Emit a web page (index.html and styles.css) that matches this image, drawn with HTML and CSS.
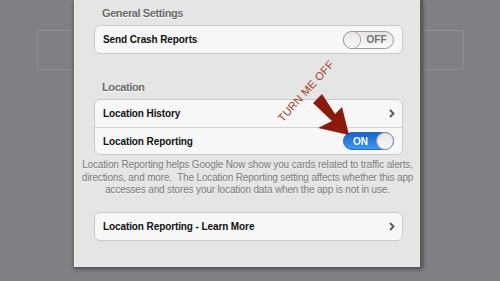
FILE: index.html
```html
<!DOCTYPE html>
<html lang="en">
<head>
  <meta charset="UTF-8">
  <title>Google Now - Settings</title>
  <link rel="stylesheet" href="styles.css">
</head>
<body>
  <div class="backdrop-box"></div>
  <div class="panel">
    <h2 class="group-title">General Settings</h2>
    <div class="card">
      <div class="row">
        <span class="label">Send Crash Reports</span>
        <span class="toggle off"><span class="knob"></span><span class="state">OFF</span></span>
      </div>
    </div>

    <h2 class="group-title second">Location</h2>
    <div class="card">
      <div class="row">
        <span class="label">Location History</span>
        <svg class="chevron" width="6" height="9" viewBox="0 0 6 9"><polyline points="1,1 4.5,4.5 1,8" fill="none" stroke="#555" stroke-width="1.8"/></svg>
      </div>
      <div class="row">
        <span class="label">Location Reporting</span>
        <span class="toggle on"><span class="state">ON</span><span class="knob"></span></span>
      </div>
    </div>
    <p class="note">Location Reporting helps Google Now show you cards related to traffic alerts,<br>directions, and more.&nbsp; The Location Reporting setting affects whether this app<br>accesses and stores your location data when the app is not in use.</p>

    <div class="card last">
      <div class="row">
        <span class="label">Location Reporting - Learn More</span>
        <svg class="chevron" width="6" height="9" viewBox="0 0 6 9"><polyline points="1,1 4.5,4.5 1,8" fill="none" stroke="#555" stroke-width="1.8"/></svg>
      </div>
    </div>
  </div>

  <!-- annotation drawn over the screenshot -->
  <svg class="arrow" width="500" height="281" viewBox="0 0 500 281">
    <polygon points="322,94 313,103 332,121 318,128 349,135 342,107 335,114" fill="#8a1a0c"/>
  </svg>
  <div class="scribble">TURN ME OFF</div>
</body>
</html>
```

FILE: styles.css
```css
body {
  margin: 0;
  background: #7f8084;
  font-family: "Liberation Sans", Arial, sans-serif;
  height: 281px;
  overflow: hidden;
}
.backdrop-box {
  position: absolute;
  left: 37px;
  top: 30px;
  width: 425px;
  height: 38px;
  border: 1px solid #8e8f92;
}
.panel {
  position: relative;
  margin-left: 74px;
  width: 345px;
  padding: 6px 0 26px 0;
  background: #e5e5e5;
  border-left: 1px solid #ededed;
  border-right: 3px solid #5b5b5e;
  box-shadow: 0 2px 4px rgba(0,0,0,0.45);
}
.group-title {
  margin: 0 0 5px 27px;
  font-size: 11px;
  line-height: 14px;
  letter-spacing: -0.4px;
  font-weight: bold;
  color: #6a6a6a;
  text-shadow: 0 1px 0 #fff;
}
.group-title.second {
  margin-top: 26px;
}
.card {
  margin: 0 17px 0 19px;
  background: #f7f7f7;
  border: 1px solid #c9c9c9;
  border-radius: 6px;
}
.card.last {
  margin-top: 15px;
}
.row {
  display: flex;
  align-items: center;
  justify-content: space-between;
  height: 27px;
  padding: 0 7px 0 8px;
}
.row + .row {
  border-top: 1px solid #d3d3d3;
  height: 26px;
}
.label {
  font-size: 10px;
  letter-spacing: -0.1px;
  font-weight: bold;
  color: #111;
}
.chevron {
  display: block;
}
.toggle {
  display: flex;
  align-items: center;
  box-sizing: border-box;
  width: 51px;
  height: 18px;
  border-radius: 9px;
  border: 1px solid #9a9a9a;
  margin-right: 1px;
}
.toggle .knob {
  width: 16px;
  height: 16px;
  border-radius: 50%;
  background: linear-gradient(#e6e6e6, #fafafa);
  box-shadow: 0 0 0 1px #9c9c9c;
}
.toggle .state {
  flex: 1;
  text-align: center;
  font-size: 10px;
  font-weight: bold;
}
.toggle.off {
  background: linear-gradient(#e4e4e4, #fbfbfb);
}
.toggle.off .state {
  color: #707070;
}
.toggle.on {
  background: linear-gradient(#1665c9, #3c97f2);
  border-color: #2a6ab8;
}
.toggle.on .state {
  color: #fff;
}
.note {
  margin: 4px -6px 0 -6px;
  font-size: 10px;
  line-height: 12.5px;
  letter-spacing: -0.15px;
  white-space: nowrap;
  color: #7a7a7a;
  text-align: center;
  text-shadow: 0 1px 0 #f2f2f2;
}
.arrow {
  position: absolute;
  left: 0;
  top: 0;
}
.scribble {
  position: absolute;
  left: 267px;
  top: 85px;
  transform: rotate(-48deg);
  font-size: 11px;
  letter-spacing: 0.2px;
  color: #a03a2c;
}
```
